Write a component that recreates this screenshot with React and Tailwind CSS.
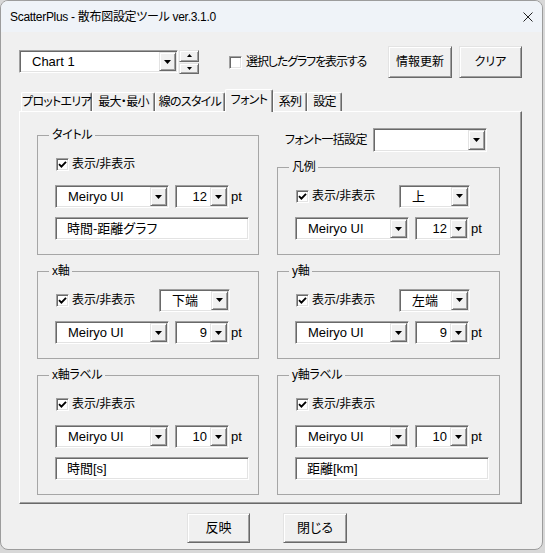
import React from "react";

const raised =
  "border border-t-[#e3e3e3] border-l-[#e3e3e3] border-r-[#696969] border-b-[#696969] shadow-[inset_1px_1px_0_#fff,inset_-1px_-1px_0_#a0a0a0]";
const sunken =
  "border border-t-[#a0a0a0] border-l-[#a0a0a0] border-r-white border-b-white shadow-[inset_1px_1px_0_#696969,inset_-1px_-1px_0_#e3e3e3]";

function Arrow() {
  return (
    <svg width="7" height="4" viewBox="0 0 7 4">
      <polygon points="0,0 7,0 3.5,4" fill="#000" />
    </svg>
  );
}

function DropBtn() {
  return (
    <div className={`w-[17px] h-full bg-[#f0f0f0] flex items-center justify-center ${raised}`}>
      <Arrow />
    </div>
  );
}

function Combo({ className, text, right }) {
  return (
    <div className={`flex bg-white p-[1px] ${sunken} ${className}`}>
      <div
        className={`flex-1 flex items-center text-[13px] leading-none whitespace-nowrap ${
          right ? "justify-end pr-[3px]" : "pl-[11px]"
        }`}
      >
        {text}
      </div>
      <DropBtn />
    </div>
  );
}

function TextBox({ text }) {
  return (
    <div className={`w-[194px] h-[23px] bg-white p-[1px] flex items-center pl-[11px] text-[13px] ${sunken}`}>
      {text}
    </div>
  );
}

function Check({ checked }) {
  return (
    <div className={`w-[13px] h-[13px] bg-white flex items-center justify-center ${sunken}`}>
      {checked && (
        <svg width="9" height="9" viewBox="0 0 9 9">
          <polyline points="1,4.2 3.4,6.6 8,1.8" fill="none" stroke="#000" strokeWidth="1.9" />
        </svg>
      )}
    </div>
  );
}

function Group({ title, children }) {
  return (
    <fieldset className="border border-[#a6a6a6] p-0 pt-[9px] pb-[14px] min-w-0">
      <legend className="ml-[11px] px-[3px] h-[16px] leading-[16px] text-[12px] tracking-[-0.3px]">{title}</legend>
      <div className="pl-[17px] flex flex-col">{children}</div>
    </fieldset>
  );
}

function CheckRow({ pos }) {
  return (
    <div className="h-[24px] flex items-center">
      <div className="w-[104px] flex items-center">
        <div className="ml-[1px]">
          <Check checked />
        </div>
        <span className="ml-[3px] text-[12px] whitespace-nowrap">表示/非表示</span>
      </div>
      {pos && <Combo className="w-[71px] h-[23px]" text={pos} />}
    </div>
  );
}

function FontRow({ size }) {
  return (
    <div className="mt-[9px] h-[23px] flex items-center">
      <Combo className="w-[114px] h-[23px]" text="Meiryo UI" />
      <Combo className="w-[54px] h-[23px] ml-[6px]" text={size} right />
      <span className="ml-[2px] text-[13px]">pt</span>
    </div>
  );
}

function Tab({ label, className, selected }) {
  return (
    <div
      className={`flex items-center justify-center whitespace-nowrap text-[12px] tracking-[-0.7px] bg-[#f0f0f0] rounded-t-[2px] border-t border-l border-r border-t-white border-l-white border-r-[#696969] shadow-[inset_-1px_0_0_#a0a0a0] ${
        selected ? "h-[23px] mb-[-1px] relative z-10 pb-[2px]" : "h-[19px]"
      } ${className}`}
    >
      {label}
    </div>
  );
}

export default function App() {
  return (
    <div className="w-[545px] h-[553px] bg-[#d8d8d8] [font-family:'Liberation_Sans','Noto_Sans_CJK_JP',sans-serif] [font-feature-settings:'palt'] text-black">
      <div className="w-[543px] h-[550px] rounded-[8px] border border-[#9c9c9c] bg-[#f0f0f0] flex flex-col overflow-hidden">
        {/* title bar */}
        <div className="h-[31px] bg-[#eff3f8] flex items-center pl-[9px] pr-[9px]">
          <span className="text-[12px] tracking-[-0.3px]">ScatterPlus - 散布図設定ツール ver.3.1.0</span>
          <svg className="ml-auto" width="10" height="10" viewBox="0 0 10 10">
            <path d="M0.5 0.5L9.5 9.5M9.5 0.5L0.5 9.5" stroke="#222" strokeWidth="1" />
          </svg>
        </div>

        {/* top row */}
        <div className="mt-[14px] h-[32px] flex items-center pl-[18px] pr-[20px]">
          <Combo className="w-[159px] h-[23px] -mt-[1px]" text="Chart 1" />
          <div className="ml-[1px] w-[20px] h-[24px] -mt-[1px] flex flex-col gap-[1px]">
            <div className={`h-[12px] bg-[#f0f0f0] flex items-center justify-center ${raised}`}>
              <svg width="5" height="3" viewBox="0 0 5 3">
                <polygon points="0,3 5,3 2.5,0" fill="#000" />
              </svg>
            </div>
            <div className={`h-[11px] bg-[#f0f0f0] flex items-center justify-center ${raised}`}>
              <svg width="5" height="3" viewBox="0 0 5 3">
                <polygon points="0,0 5,0 2.5,3" fill="#000" />
              </svg>
            </div>
          </div>
          <div className="ml-[30px]">
            <Check />
          </div>
          <span className="ml-[4px] text-[12px] tracking-[-1.1px] whitespace-nowrap">選択したグラフを表示する</span>
          <button className={`ml-auto w-[64px] h-[32px] bg-[#f0f0f0] text-[12px] ${raised}`}>情報更新</button>
          <button className={`ml-[7px] w-[63px] h-[32px] bg-[#f0f0f0] text-[12px] ${raised}`}>クリア</button>
        </div>

        {/* tabs */}
        <div className="mt-[11px] h-[22px] flex items-end pl-[20px]">
          <Tab label="プロットエリア" className="w-[71px]" />
          <Tab label="最大・最小" className="w-[63px]" />
          <Tab label="線のスタイル" className="w-[70px]" />
          <Tab label="フォント" className="w-[48px]" selected />
          <Tab label="系列" className="w-[34px]" />
          <Tab label="設定" className="w-[35px]" />
        </div>

        {/* panel */}
        <div className="ml-[18px] w-[503px] h-[393px] border border-t-white border-l-white border-r-[#696969] border-b-[#696969] shadow-[inset_-1px_-1px_0_#a0a0a0] flex pl-[17px] gap-[18px]">
          {/* left column */}
          <div className="w-[222px] pt-[15px] flex flex-col gap-[8px]">
            <Group title="タイトル">
              <CheckRow />
              <FontRow size="12" />
              <div className="mt-[9px]">
                <TextBox text="時間-距離グラフ" />
              </div>
            </Group>
            <Group title="x軸">
              <CheckRow pos="下端" />
              <FontRow size="9" />
            </Group>
            <Group title="x軸ラベル">
              <CheckRow />
              <FontRow size="10" />
              <div className="mt-[9px]">
                <TextBox text="時間[s]" />
              </div>
            </Group>
          </div>

          {/* right column */}
          <div className="w-[223px] pt-[16px] flex flex-col">
            <div className="h-[24px] flex items-center pl-[8px] pr-[13px]">
              <span className="text-[12px] tracking-[-0.7px] whitespace-nowrap">フォント一括設定</span>
              <Combo className="ml-auto w-[114px] h-[24px]" text="" />
            </div>
            <div className="mt-[7px] flex flex-col gap-[8px]">
              <Group title="凡例">
                <CheckRow pos="上" />
                <FontRow size="12" />
              </Group>
              <Group title="y軸">
                <CheckRow pos="左端" />
                <FontRow size="9" />
              </Group>
              <Group title="y軸ラベル">
                <CheckRow />
                <FontRow size="10" />
                <div className="mt-[9px]">
                  <TextBox text="距離[km]" />
                </div>
              </Group>
            </div>
          </div>
        </div>

        {/* bottom buttons */}
        <div className="mt-[9px] h-[30px] flex justify-center gap-[33px] pr-[9px]">
          <button className={`w-[63px] h-[30px] bg-[#f0f0f0] text-[13px] ${raised}`}>反映</button>
          <button className={`w-[64px] h-[30px] bg-[#f0f0f0] text-[13px] ${raised}`}>閉じる</button>
        </div>
      </div>
    </div>
  );
}
